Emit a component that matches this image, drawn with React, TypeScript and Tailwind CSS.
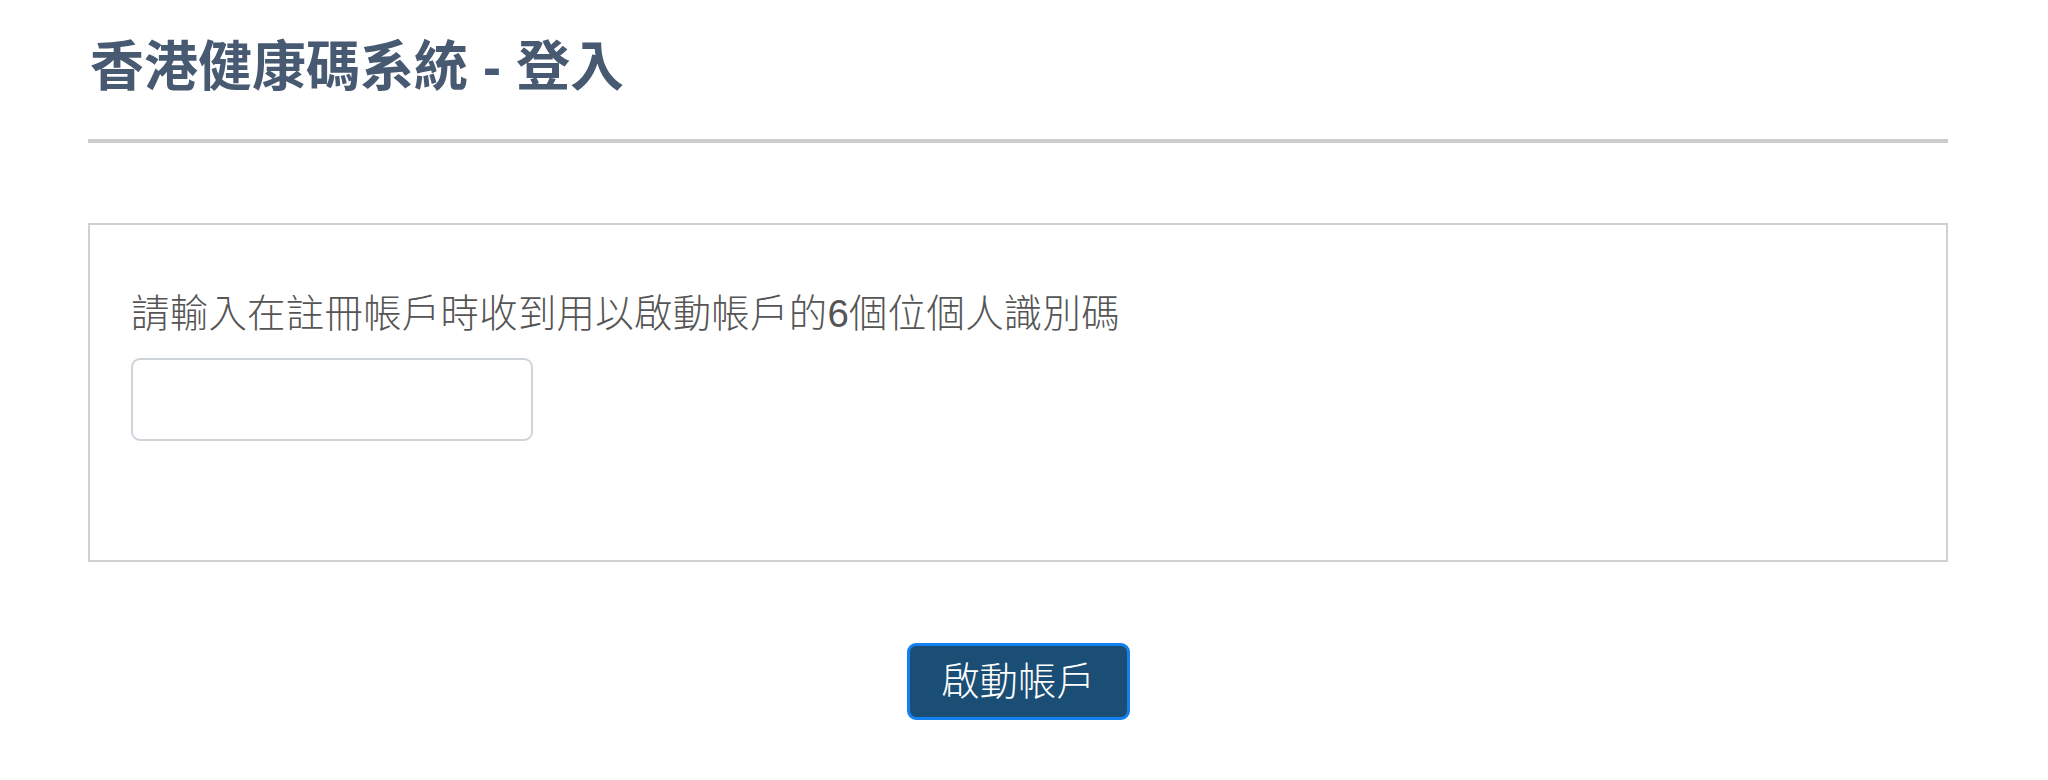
export default function App() {
  return (
    <main className="min-h-screen w-[2048px] bg-white font-['Liberation_Sans','Noto_Sans_CJK_TC',sans-serif]">
      <div className="ml-[88px] w-[1860px]">
        <h1 className="border-b-4 border-[#cccccc] pb-[45px] pl-[2px] pt-[40px] text-[54px] font-semibold leading-none text-[#475a72]">
          香港健康碼系統 - 登入
        </h1>

        <section className="mt-[80px] border-2 border-[#d0d0d0] pb-[119px] pl-[41px] pt-[70px]">
          <label
            htmlFor="pin"
            className="block text-[38.4px] font-light leading-none tracking-[0.3px] text-[#555555]"
          >
            請輸入在註冊帳戶時收到用以啟動帳戶的6個位個人識別碼
          </label>
          <input
            id="pin"
            type="text"
            className="mt-[25px] block h-[83px] w-[402px] rounded-[9px] border-2 border-[#ced4da] bg-white px-4 text-[38px] outline-none"
          />
        </section>

        <div className="mt-[81px] flex justify-center">
          <button
            type="button"
            className="flex h-[77px] w-[223px] items-center justify-center rounded-[9px] border-[3px] border-[#1580f0] bg-[#1b4e75] text-[38.4px] font-light leading-none text-white"
          >
            啟動帳戶
          </button>
        </div>
      </div>
    </main>
  );
}
